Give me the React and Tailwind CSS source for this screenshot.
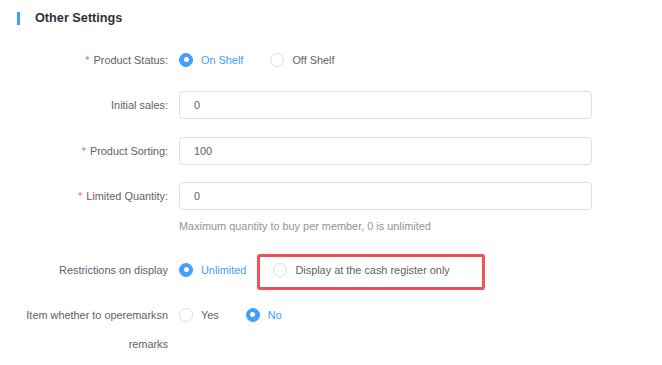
import React from 'react';

function Radio({ checked, label }) {
  return (
    <label className="flex items-center mr-[27px] cursor-pointer">
      {checked ? (
        <span className="w-[14px] h-[14px] rounded-full bg-[#409eff] border border-[#409eff] flex items-center justify-center">
          <span className="w-[5px] h-[5px] rounded-full bg-white"></span>
        </span>
      ) : (
        <span className="w-[14px] h-[14px] rounded-full bg-white border border-[#dcdfe6]"></span>
      )}
      <span className={'ml-[8px] text-[10.9px] ' + (checked ? 'text-[#409eff]' : 'text-[#606266]')}>{label}</span>
    </label>
  );
}

function Label({ required, children }) {
  return (
    <div className="w-[168px] shrink-0 text-right text-[10.9px] text-[#606266] leading-[28px]">
      {required && <span className="text-[#f56c6c] mr-[4px]">*</span>}
      {children}
    </div>
  );
}

function Input({ value }) {
  return (
    <div className="w-[413px] h-[28px] border border-[#dcdfe6] rounded-[4px] bg-white flex items-center pl-[14px] text-[10.9px] text-[#606266]">
      {value}
    </div>
  );
}

function App() {
  return (
    <div className="w-[662px] h-[365px] bg-white overflow-hidden" style={{ fontFamily: '"Liberation Sans", Arial, sans-serif' }}>
      <div className="flex items-center pt-[11px] pl-[17px]">
        <span className="w-[3px] h-[13px] bg-[#409eff]"></span>
        <span className="ml-[15px] text-[12.7px] font-bold text-[#303133] leading-[14px]">Other Settings</span>
      </div>

      <div className="mt-[21px]">
        <div className="flex">
          <Label required>Product Status:</Label>
          <div className="ml-[11px] flex items-center h-[28px]">
            <Radio checked label="On Shelf" />
            <Radio label="Off Shelf" />
          </div>
        </div>

        <div className="flex mt-[17px]">
          <Label>Initial sales:</Label>
          <div className="ml-[11px]"><Input value="0" /></div>
        </div>

        <div className="flex mt-[18px]">
          <Label required>Product Sorting:</Label>
          <div className="ml-[11px]"><Input value="100" /></div>
        </div>

        <div className="flex mt-[17px]">
          <Label required>Limited Quantity:</Label>
          <div className="ml-[11px]">
            <Input value="0" />
            <div className="text-[10.9px] text-[#909399] mt-[8px] leading-[16px]">Maximum quantity to buy per member, 0 is unlimited</div>
          </div>
        </div>

        <div className="flex mt-[22px]">
          <Label>Restrictions on display</Label>
          <div className="ml-[11px] flex items-center h-[28px] relative">
            <Radio checked label="Unlimited" />
            <Radio label="Display at the cash register only" />
            <div className="absolute left-[78px] top-[-2px] w-[228px] h-[36px] border-[3px] border-[#f0525a] rounded-[3px] pointer-events-none"></div>
          </div>
        </div>

        <div className="flex mt-[17px]">
          <div className="w-[168px] shrink-0 text-right text-[10.9px] text-[#606266] leading-[29px]">
            Item whether to operemarksn remarks
          </div>
          <div className="ml-[11px] flex items-center h-[28px]">
            <Radio label="Yes" />
            <Radio checked label="No" />
          </div>
        </div>
      </div>
    </div>
  );
}

export default App;
